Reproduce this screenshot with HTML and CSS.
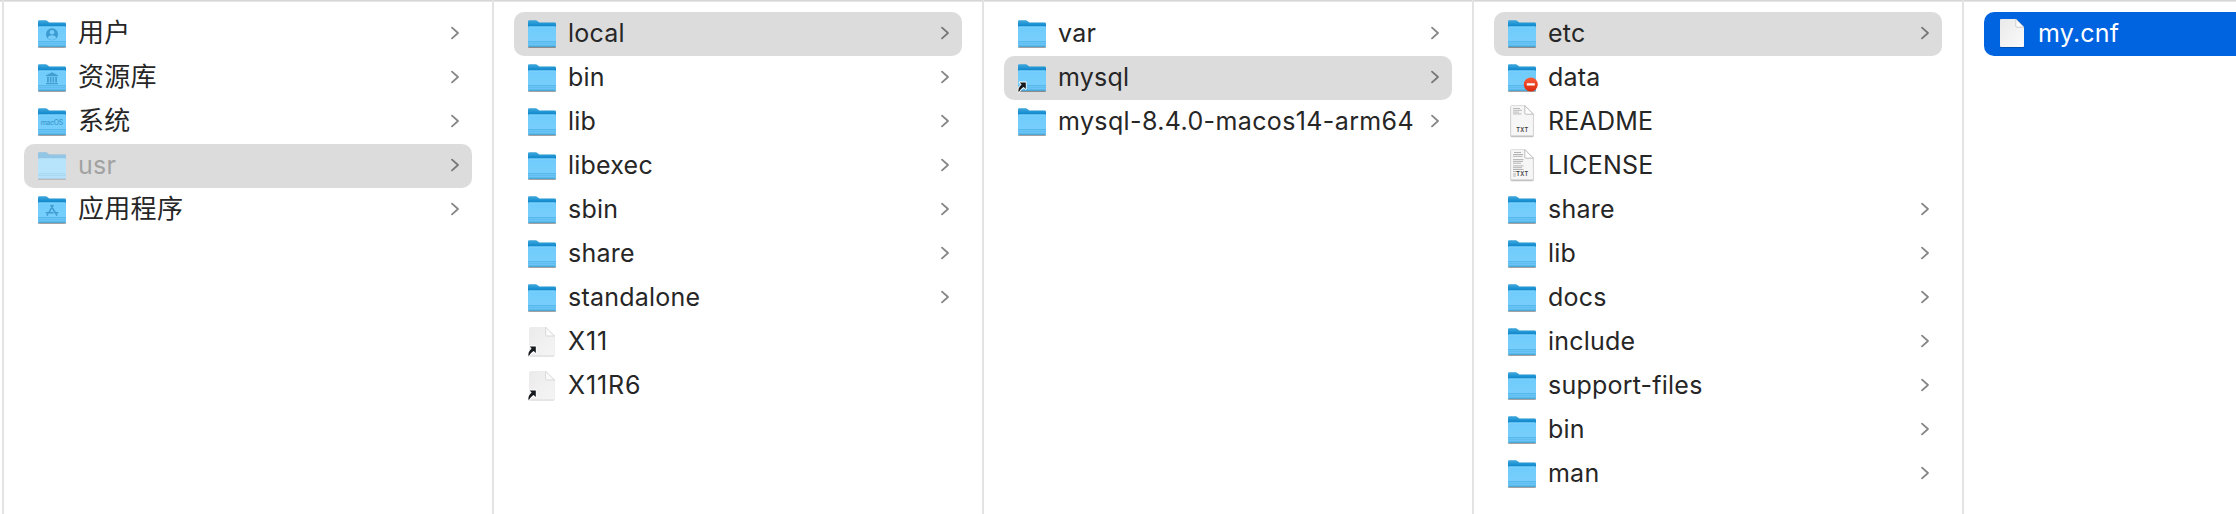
FILE: index.html
```
<!DOCTYPE html>
<html lang="zh-CN">
<head>
<meta charset="utf-8">
<title>mysql</title>
<link rel="stylesheet" href="styles.css">
</head>
<body>
<svg class="defs" aria-hidden="true">
  <defs>
    <linearGradient id="back" x1="0" y1="0" x2="0" y2="1"><stop offset="0" stop-color="#3fa9de"/><stop offset=".22" stop-color="#1188cd"/><stop offset="1" stop-color="#1188cd"/></linearGradient>
    <linearGradient id="front" x1="0" y1="0" x2="0" y2="1"><stop offset="0" stop-color="#7dd2fb"/><stop offset=".12" stop-color="#71ccfb"/><stop offset=".7" stop-color="#76cefc"/><stop offset="1" stop-color="#62c0f2"/></linearGradient>
    <linearGradient id="paper" x1="0" y1="0" x2="1" y2="1"><stop offset="0" stop-color="#e9e9e9"/><stop offset="1" stop-color="#fbfbfb"/></linearGradient>
    <linearGradient id="pale" x1="0" y1="0" x2="1" y2="1"><stop offset="0" stop-color="#ebebeb"/><stop offset="1" stop-color="#f5f5f5"/></linearGradient>
    <linearGradient id="stop" x1="0" y1="0" x2="0" y2="1"><stop offset="0" stop-color="#fb5a38"/><stop offset="1" stop-color="#d92a0c"/></linearGradient>
    <filter id="shade" x="-20%" y="-20%" width="140%" height="150%"><feDropShadow dx="0" dy=".8" stdDeviation=".7" flood-color="#000" flood-opacity=".5"/></filter>
    <filter id="soft" x="-20%" y="-20%" width="140%" height="150%"><feDropShadow dx="0" dy=".5" stdDeviation=".6" flood-color="#000" flood-opacity=".4"/></filter>
  </defs>
  <symbol id="folder" viewBox="0 0 36 44">
    <g filter="url(#shade)">
      <path fill="url(#back)" d="M4 9.6Q4 8.2 5.4 8.2H11.6Q12.6 8.2 13.3 8.9L14.6 10Q15.3 10.6 16.3 10.6H30.6Q32 10.6 32 12V33.4Q32 34.6 30.8 34.6H5.2Q4 34.6 4 33.4Z"/>
      <path fill="url(#front)" d="M4 15.4Q4 14.2 5.2 14.2H30.8Q32 14.2 32 15.4V33.4Q32 34.6 30.8 34.6H5.2Q4 34.6 4 33.4Z"/>
      <path stroke="#4bacdf" stroke-width=".8" d="M4 29.7H32"/>
      <path stroke="#5bb9ea" stroke-width=".7" d="M4 31.5H32"/>
      <path stroke="#48a4d4" stroke-width=".9" d="M5 34.2H31"/>
    </g>
  </symbol>
  <symbol id="folder-faded" viewBox="0 0 36 44">
    <g filter="url(#soft)">
      <path fill="#93c5e5" d="M4 9.6Q4 8.2 5.4 8.2H11.6Q12.6 8.2 13.3 8.9L14.6 10Q15.3 10.6 16.3 10.6H30.6Q32 10.6 32 12V33.4Q32 34.6 30.8 34.6H5.2Q4 34.6 4 33.4Z"/>
      <path fill="#b7e3fb" d="M4 15.4Q4 14.2 5.2 14.2H30.8Q32 14.2 32 15.4V33.4Q32 34.6 30.8 34.6H5.2Q4 34.6 4 33.4Z"/>
      <path stroke="#a3d4ee" stroke-width=".8" d="M4 29.7H32M4 31.6H32"/>
    </g>
  </symbol>
  <symbol id="users" viewBox="0 0 36 44">
    <use href="#folder"/>
    <circle cx="18" cy="22.2" r="6" fill="#3c9bd0"/>
    <circle cx="18" cy="20.3" r="2.3" fill="#76cdfa"/>
    <path fill="#76cdfa" d="M13.7 26.1C14.3 24 16 23.3 18 23.3S21.7 24 22.3 26.1A5.6 5.6 0 0 1 13.7 26.1Z"/>
  </symbol>
  <symbol id="library" viewBox="0 0 36 44">
    <use href="#folder"/>
    <path fill="#429fd2" d="M18 16.2 24 19.3V20.3H12V19.3ZM12 27H24V28.2H12ZM13 21H14.8V26.6H13ZM15.8 21H17.4V26.6H15.8ZM18.5 21H20.1V26.6H18.5ZM21.2 21H23V26.6H21.2Z"/>
  </symbol>
  <symbol id="apps" viewBox="0 0 36 44">
    <use href="#folder"/>
    <path fill="none" stroke="#3f9bcf" stroke-width="1.5" stroke-linecap="round" d="M17 17.5 22.7 27.2M19 17.5 14.8 24.6M13.7 26.4 13.2 27.2M12.3 24.7H19M21.8 24.7H23.7"/>
  </symbol>
  <symbol id="arrow" viewBox="0 0 36 44">
    <path fill="#16191d" stroke="#fff" stroke-width="1.6" stroke-linejoin="round" paint-order="stroke" d="M5.7 26.4H11.8V33L9.7 31C7.6 32.3 6 33.7 4.7 36.5 3.8 34.2 4.7 31 7.6 28.6Z"/>
  </symbol>
  <symbol id="folder-link" viewBox="0 0 36 44"><use href="#folder"/><use href="#arrow"/></symbol>
  <symbol id="folder-denied" viewBox="0 0 36 44">
    <use href="#folder"/>
    <circle cx="26.8" cy="28.5" r="7" fill="url(#stop)"/>
    <rect x="22.8" y="27.3" width="8" height="2.3" rx=".3" fill="#fff"/>
  </symbol>
  <symbol id="file-link" viewBox="0 0 36 44">
    <g filter="url(#soft)">
      <path fill="url(#pale)" d="M5.6 8.4Q5.6 7.2 6.8 7.2H21.6L30.4 16V34.4Q30.4 35.6 29.2 35.6H6.8Q5.6 35.6 5.6 34.4Z"/>
      <path fill="#fafafa" stroke="#cfcfcf" stroke-width=".7" d="M21.6 7.2V14.8Q21.6 16 22.8 16H30.4Z"/>
    </g>
    <use href="#arrow"/>
  </symbol>
  <symbol id="file" viewBox="0 0 36 44">
    <g filter="url(#soft)">
      <path fill="url(#paper)" d="M6 8Q6 7 7 7H21.8L30 15.2V34Q30 35 29 35H7Q6 35 6 34Z"/>
      <path fill="#fdfdfd" stroke="#b4b4b4" stroke-width=".6" d="M21.8 7V14.2Q21.8 15.2 22.8 15.2H30Z"/>
    </g>
  </symbol>
  <symbol id="txt" viewBox="0 0 36 44">
    <g filter="url(#shade)">
      <path fill="#f6f6f6" stroke="#c6c6c6" stroke-width=".5" d="M6.7 6.4Q6.7 5.6 7.5 5.6H20.8L29.4 14.2V34.8Q29.4 35.8 28.4 35.8H7.7Q6.7 35.8 6.7 34.8Z"/>
    </g>
    <path fill="#fff" stroke="#adadad" stroke-width=".8" d="M20.8 5.6V13.2Q20.8 14.2 21.8 14.2H29.4Z"/>
  </symbol>
  <symbol id="readme" viewBox="0 0 36 44">
    <use href="#txt"/>
    <path stroke="#b3b3b3" stroke-width=".9" fill="none" d="M9 8.5H16M9 10.3H18M9 12.1H15M9 13.9H17.5"/>
  </symbol>
  <symbol id="license" viewBox="0 0 36 44">
    <use href="#txt"/>
    <path stroke="#acacac" stroke-width=".9" fill="none" d="M10 8.5H17M9 10.5H19M9 12.3H18.5M9 15.6H19.5M9 17.4H19M9 19.2H17M9 21.9H19.5M9 23.7H18M9 25.5H19.5M9 27.5H14M9 30H12M9 32H12"/>
  </symbol>
  <symbol id="chevron" viewBox="0 0 12 16">
    <path fill="none" stroke="currentColor" stroke-width="1.8" stroke-linecap="round" stroke-linejoin="round" d="M3 2.6 9 8 3 13.4"/>
  </symbol>
</svg>

<main class="browser">
  <ul class="column">
    <li class="row"><svg class="icon"><use href="#users"/></svg><span class="name han">用户</span><svg class="chevron"><use href="#chevron"/></svg></li>
    <li class="row"><svg class="icon"><use href="#library"/></svg><span class="name han">资源库</span><svg class="chevron"><use href="#chevron"/></svg></li>
    <li class="row"><svg class="icon"><use href="#folder"/><text class="macos" x="18" y="24.8" text-anchor="middle" textLength="22.5">macOS</text></svg><span class="name han">系统</span><svg class="chevron"><use href="#chevron"/></svg></li>
    <li class="row open hidden-item"><svg class="icon"><use href="#folder-faded"/></svg><span class="name">usr</span><svg class="chevron"><use href="#chevron"/></svg></li>
    <li class="row"><svg class="icon"><use href="#apps"/></svg><span class="name han">应用程序</span><svg class="chevron"><use href="#chevron"/></svg></li>
  </ul>
  <ul class="column">
    <li class="row open"><svg class="icon"><use href="#folder"/></svg><span class="name">local</span><svg class="chevron"><use href="#chevron"/></svg></li>
    <li class="row"><svg class="icon"><use href="#folder"/></svg><span class="name">bin</span><svg class="chevron"><use href="#chevron"/></svg></li>
    <li class="row"><svg class="icon"><use href="#folder"/></svg><span class="name">lib</span><svg class="chevron"><use href="#chevron"/></svg></li>
    <li class="row"><svg class="icon"><use href="#folder"/></svg><span class="name">libexec</span><svg class="chevron"><use href="#chevron"/></svg></li>
    <li class="row"><svg class="icon"><use href="#folder"/></svg><span class="name">sbin</span><svg class="chevron"><use href="#chevron"/></svg></li>
    <li class="row"><svg class="icon"><use href="#folder"/></svg><span class="name">share</span><svg class="chevron"><use href="#chevron"/></svg></li>
    <li class="row"><svg class="icon"><use href="#folder"/></svg><span class="name">standalone</span><svg class="chevron"><use href="#chevron"/></svg></li>
    <li class="row"><svg class="icon"><use href="#file-link"/></svg><span class="name digits">X11</span></li>
    <li class="row"><svg class="icon"><use href="#file-link"/></svg><span class="name digits">X11R6</span></li>
  </ul>
  <ul class="column">
    <li class="row"><svg class="icon"><use href="#folder"/></svg><span class="name">var</span><svg class="chevron"><use href="#chevron"/></svg></li>
    <li class="row open"><svg class="icon"><use href="#folder-link"/></svg><span class="name">mysql</span><svg class="chevron"><use href="#chevron"/></svg></li>
    <li class="row"><svg class="icon"><use href="#folder"/></svg><span class="name version">mysql-8.4.0-macos14-arm64</span><svg class="chevron"><use href="#chevron"/></svg></li>
  </ul>
  <ul class="column">
    <li class="row open"><svg class="icon"><use href="#folder"/></svg><span class="name">etc</span><svg class="chevron"><use href="#chevron"/></svg></li>
    <li class="row"><svg class="icon"><use href="#folder-denied"/></svg><span class="name">data</span></li>
    <li class="row"><svg class="icon"><use href="#readme"/><text class="txt" x="18.2" y="32" text-anchor="middle" textLength="12">TXT</text></svg><span class="name">README</span></li>
    <li class="row"><svg class="icon"><use href="#license"/><text class="txt" x="18.2" y="32" text-anchor="middle" textLength="12">TXT</text></svg><span class="name">LICENSE</span></li>
    <li class="row"><svg class="icon"><use href="#folder"/></svg><span class="name">share</span><svg class="chevron"><use href="#chevron"/></svg></li>
    <li class="row"><svg class="icon"><use href="#folder"/></svg><span class="name">lib</span><svg class="chevron"><use href="#chevron"/></svg></li>
    <li class="row"><svg class="icon"><use href="#folder"/></svg><span class="name">docs</span><svg class="chevron"><use href="#chevron"/></svg></li>
    <li class="row"><svg class="icon"><use href="#folder"/></svg><span class="name">include</span><svg class="chevron"><use href="#chevron"/></svg></li>
    <li class="row"><svg class="icon"><use href="#folder"/></svg><span class="name">support-files</span><svg class="chevron"><use href="#chevron"/></svg></li>
    <li class="row"><svg class="icon"><use href="#folder"/></svg><span class="name">bin</span><svg class="chevron"><use href="#chevron"/></svg></li>
    <li class="row"><svg class="icon"><use href="#folder"/></svg><span class="name">man</span><svg class="chevron"><use href="#chevron"/></svg></li>
  </ul>
  <ul class="column last">
    <li class="row selected"><svg class="icon"><use href="#file"/></svg><span class="name">my.cnf</span></li>
  </ul>
</main>
</body>
</html>
```
FILE: styles.css
```
* { box-sizing: border-box; }
body { margin: 0; background: #fff; overflow: hidden; }
.defs { position: absolute; width: 0; height: 0; }
.browser {
  display: flex;
  height: 514px;
  padding-left: 2px;
  background: linear-gradient(#d6d6d6 0 1px, #e6e6e6 1px 2px, #fff 2px);
  font-family: Inter, "Noto Sans CJK SC", sans-serif;
  font-size: 25px;
  color: #262626;
}
.column {
  flex: 0 0 490px;
  margin: 0;
  padding: 12px 20px 0;
  border-left: 2px solid #e3e3e3;
  list-style: none;
}
.column.last { flex: 1; padding-right: 0; }
.row {
  display: flex;
  align-items: center;
  height: 44px;
  padding: 0 10px;
  border-radius: 10px;
  white-space: nowrap;
}
.last .row { border-radius: 10px 0 0 10px; }
.icon { flex: none; width: 36px; height: 44px; }
.name { flex: 1; margin-left: 8px; line-height: 42px; height: 44px; letter-spacing: 0.22px; }
.name.han { font-size: 26px; letter-spacing: 0.3px; }
.name.digits { letter-spacing: 0.9px; }
.name.version { letter-spacing: 0.38px; }
.chevron { flex: none; width: 12px; height: 16px; margin: -2px 0.6px 0 0; color: #868686; }
.open { background: #dcdcdc; }
.open .chevron { color: #777; }
.hidden-item .name { color: #a2a2a2; }
.selected { background: #0064e1; color: #fff; }
.macos { font: 500 7px Inter, sans-serif; fill: #3c9bd0; }
.txt { font: 600 5.6px Inter, sans-serif; fill: #3c3c3c; }
```
